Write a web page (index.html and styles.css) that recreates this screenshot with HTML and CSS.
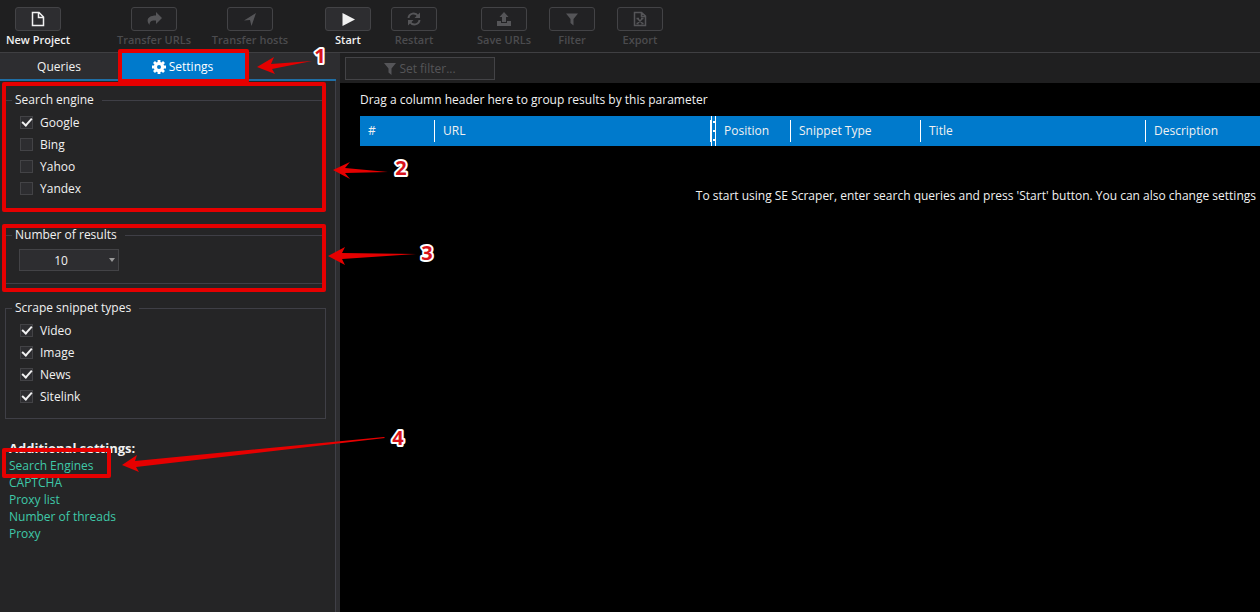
FILE: index.html
```html
<!DOCTYPE html>
<html lang="en">
<head>
    <meta charset="UTF-8">
    <meta name="viewport" content="width=device-width, initial-scale=1.0">
    <title>SE Scraper</title>
    <link rel="stylesheet" href="styles.css">
</head>
<body>
    <header class="toolbar">
        <div class="group">
            <button class="tool">
                <span class="icon"><svg width="16" height="16" viewBox="0 0 16 16" fill="none" stroke="currentColor" stroke-width="1.5"><path d="M2.500 1.500H9L13.500 6V14.500H2.500ZM8.500 1.500V6.500H13.500"/></svg></span>
                New Project
            </button>
        </div>
        <div class="group transfer">
            <button class="tool" disabled>
                <span class="icon"><svg width="16" height="16" viewBox="0 0 16 16" fill="currentColor"><path d="M10 1l6 6-6 6V9.500C6 9 3.500 10 3.500 14 -0.500 9 2 4.500 10 4.500Z"/></svg></span>
                Transfer URLs
            </button>
            <button class="tool" disabled>
                <span class="icon"><svg width="16" height="16" viewBox="0 0 16 16" fill="currentColor"><path d="M14 2L9.500 15L8 9L2 9.500Z"/></svg></span>
                Transfer hosts
            </button>
        </div>
        <div class="group run">
            <button class="tool">
                <span class="icon"><svg width="16" height="16" viewBox="0 0 16 16" fill="currentColor"><path d="M2.500 2L15 8.500 2.500 15Z"/></svg></span>
                Start
            </button>
            <button class="tool" disabled>
                <span class="icon"><svg width="16" height="16" viewBox="0 0 16 16" fill="none" stroke="currentColor" stroke-width="2"><path d="M2.500 7C3 2 9.500 1 12 5M13.500 9C13 14 6.500 15 4 11"/><path d="M14 1.500V7H8.500ZM2 14.500V9H7.500Z" fill="currentColor" stroke="none"/></svg></span>
                Restart
            </button>
        </div>
        <div class="group save">
            <button class="tool" disabled>
                <span class="icon"><svg width="16" height="16" viewBox="0 0 16 16" fill="currentColor"><path d="M8 1l4.500 5H10v5H6V6H3.500ZM1 10h4v2h6v-2h4v5H1Z"/></svg></span>
                Save URLs
            </button>
            <button class="tool" disabled>
                <span class="icon"><svg width="16" height="16" viewBox="0 0 16 16" fill="currentColor"><path d="M2 2.500h12L9.500 8v6.500L6.500 12V8Z"/></svg></span>
                Filter
            </button>
            <button class="tool" disabled>
                <span class="icon"><svg width="16" height="16" viewBox="0 0 16 16" fill="none" stroke="currentColor" stroke-width="1.5"><path d="M2.500 1.500H9.500L13.500 5V14.500H2.500ZM9.500 1.500V5.500H13.500M5.500 7.500L10.500 12.500M10.500 7.500L5.500 12.500M4.500 7.500h2.500M9 7.500h2.500M4.500 12.500h2.500M9 12.500h2.500"/></svg></span>
                Export
            </button>
        </div>
    </header>

    <div class="content">
        <aside class="sidebar">
            <nav class="tabs">
                <button class="tab">Queries</button>
                <button class="tab active">
                    <svg width="14" height="14" viewBox="0 0 14 14"><circle cx="7" cy="7" r="3.600" fill="none" stroke="currentColor" stroke-width="3.200"/><path d="M7 0V3M7 11V14M0 7H3M11 7H14M2 2L4 4M10 10L12 12M12 2L10 4M4 10L2 12" stroke="currentColor" stroke-width="2.800"/></svg>
                    Settings
                </button>
            </nav>
            <div class="panel">
                <fieldset>
                    <legend>Search engine</legend>
                    <label class="check"><input type="checkbox" checked>Google</label>
                    <label class="check"><input type="checkbox">Bing</label>
                    <label class="check"><input type="checkbox">Yahoo</label>
                    <label class="check"><input type="checkbox">Yandex</label>
                </fieldset>
                <fieldset>
                    <legend id="results-label">Number of results</legend>
                    <div class="dropdown">
                        <select aria-labelledby="results-label">
                            <option>10</option>
                            <option>20</option>
                            <option>50</option>
                            <option>100</option>
                        </select>
                    </div>
                </fieldset>
                <fieldset>
                    <legend>Scrape snippet types</legend>
                    <label class="check"><input type="checkbox" checked>Video</label>
                    <label class="check"><input type="checkbox" checked>Image</label>
                    <label class="check"><input type="checkbox" checked>News</label>
                    <label class="check"><input type="checkbox" checked>Sitelink</label>
                </fieldset>
                <div class="links">
                    <h2>Additional settings:</h2>
                    <a href="#">Search Engines</a>
                    <a href="#">CAPTCHA</a>
                    <a href="#">Proxy list</a>
                    <a href="#">Number of threads</a>
                    <a href="#">Proxy</a>
                </div>
            </div>
        </aside>

        <main>
            <div class="filter-bar">
                <button class="set-filter" disabled>
                    <svg width="12" height="12" viewBox="0 0 12 12" fill="currentColor"><path d="M0 0h12L7.500 5.500V12L4.500 9.500V5.500Z"/></svg>
                    Set filter...
                </button>
            </div>
            <div class="results">
                <p class="group-hint">Drag a column header here to group results by this parameter</p>
                <table>
                    <colgroup>
                        <col class="col-num"><col class="col-url"><col class="col-grip"><col class="col-num"><col class="col-type"><col class="col-title"><col>
                    </colgroup>
                    <thead>
                        <tr>
                            <th><span>#</span></th>
                            <th><span>URL</span></th>
                            <th class="grip"></th>
                            <th><span>Position</span></th>
                            <th><span>Snippet Type</span></th>
                            <th><span>Title</span></th>
                            <th><span>Description</span></th>
                        </tr>
                    </thead>
                </table>
                <p class="empty">To start using SE Scraper, enter search queries and press 'Start' button. You can also change settings</p>
            </div>
        </main>
    </div>

    <!-- tutorial callouts -->
    <svg class="callouts" width="460" height="490" viewBox="0 0 460 490">
        <g class="frames">
            <rect x="120" y="51" width="127" height="30"/>
            <rect x="4" y="84" width="320" height="126"/>
            <rect x="4" y="226" width="320" height="64"/>
            <rect x="4" y="450" width="105" height="26"/>
        </g>
        <g class="arrows">
            <path d="M257 67L274 57 271 64 312 61 272 69 275 74Z"/>
            <path d="M333 170L350 162 345 168 388 172 345 173 350 179Z"/>
            <path d="M328 256L345 247 342 253 416 254 342 259 345 265Z"/>
            <path d="M122 465L137 455 135 461 384 437 385 438 136 467 139 472Z"/>
        </g>
        <g class="numbers">
            <text x="320" y="63">1</text>
            <text x="401" y="175">2</text>
            <text x="427" y="260">3</text>
            <text x="398" y="445">4</text>
        </g>
    </svg>
</body>
</html>
```
FILE: styles.css
```css
* { box-sizing: border-box; }
body { font-family: "Open Sans", "Noto Sans", sans-serif; font-size: 12px; background: #1f1f20; color: #f1f1f1; margin: 0; min-height: 100vh; display: flex; flex-direction: column; position: relative; overflow-x: hidden; }
button, select, input { font: inherit; color: inherit; margin: 0; }
button { border: none; background: none; padding: 0; cursor: pointer; }
button:disabled { cursor: default; }
svg { flex: none; }

.toolbar { display: flex; padding: 7px 5px 4px; border-bottom: 1px solid #3f3f42; }
.group { display: flex; }
.transfer { margin-left: 35px; }
.run { margin-left: 17px; }
.save { margin-left: 24px; gap: 2px; }
.tool { width: 66px; display: flex; flex-direction: column; align-items: center; font-size: 11px; font-weight: 600; line-height: 16px; white-space: nowrap; }
.transfer .tool { width: 96px; }
.tool:disabled { color: #4b4b4e; }
.icon { width: 46px; height: 24px; margin-bottom: 1px; display: flex; align-items: center; justify-content: center; border: 1px solid #434346; border-radius: 3px; background: #2d2d30; }
.tool:disabled .icon { background: #222224; color: #555558; }

.content { flex: 1; display: flex; }
.sidebar { width: 340px; flex: none; background: #252526; border-right: 4px solid #2d2d30; }
.tabs { display: flex; height: 28px; background: #2d2d30; border-bottom: 2px solid #1f6ea5; }
.tab { width: 118px; padding-top: 1px; display: flex; align-items: center; justify-content: center; gap: 3px; }
.tab.active { width: 129px; background: #007acc; color: #fff; }
.panel { padding: 10px 9px 20px 5px; border-right: 1px solid #3f3f46; min-height: calc(100% - 28px); }

fieldset { margin: 0 0 15px; padding: 2px 6px 11px; border: 1px solid #3f3f46; }
legend { padding: 0 8px 0 3px; line-height: 18px; }
.check { display: flex; align-items: center; gap: 7px; height: 22px; padding-left: 8px; }
.check input { appearance: none; width: 13px; height: 13px; border: 1px solid #434346; background: #2d2d30; display: grid; place-content: center; }
.check input:checked::before { content: ""; width: 8px; height: 4px; margin-top: -3px; border: solid #f1f1f1; border-width: 0 0 2px 2px; transform: rotate(-48deg); }
.dropdown { position: relative; width: 100px; margin: 3px 0 1px 7px; }
.dropdown select { display: block; appearance: none; width: 100%; height: 22px; padding: 0 16px 0 0; border: 1px solid #434346; border-radius: 0; background: #2d2d30; text-align: center; text-align-last: center; }
.dropdown::after { content: ""; position: absolute; right: 4px; top: 9px; border: 3px solid transparent; border-top: 4px solid #999; pointer-events: none; }

.links { display: flex; flex-direction: column; align-items: flex-start; padding: 6px 4px; line-height: 17px; }
.links h2 { margin: 0; font-size: 13px; line-height: 17px; }
.links a { color: #3fc9a9; text-decoration: none; }
.links a:hover { text-decoration: underline; }

main { flex: 1; min-width: 0; display: flex; flex-direction: column; }
.filter-bar { height: 30px; padding: 4px 5px; }
.set-filter { width: 150px; height: 23px; display: flex; align-items: center; justify-content: center; gap: 3px; border: 1px solid #434346; background: #252526; color: #555558; }
.results { flex: 1; background: #000; padding: 8px 0 0 20px; }
.group-hint { margin: 0; line-height: 18px; padding-bottom: 7px; }
table { width: 100%; table-layout: fixed; border-spacing: 0; background: #007acc; }
.col-num { width: 75px; }
.col-url { width: 276px; }
.col-grip { width: 5px; }
.col-type { width: 130px; }
.col-title { width: 225px; }
th { padding: 4px 0; text-align: left; font-weight: 400; white-space: nowrap; }
th span { display: block; padding-left: 8px; line-height: 22px; border-right: 1px solid #fff; }
th:last-child span { border-right: none; }
.grip { border: solid #fff; border-width: 0 1px; background: linear-gradient(#fff 2px, transparent 2px) 1px 5px / 2px 9px repeat-y; }
.empty { margin: 41px 4px 0 0; line-height: 18px; text-align: right; }

.callouts { position: absolute; left: 0; top: 0; pointer-events: none; }
.frames { fill: none; stroke: #e60000; stroke-width: 4; stroke-linejoin: round; }
.arrows { fill: #e60000; }
.numbers { font-size: 20px; font-weight: 700; text-anchor: middle; fill: #d8121a; stroke: #fff; stroke-width: 4; stroke-linejoin: round; paint-order: stroke; }
```
